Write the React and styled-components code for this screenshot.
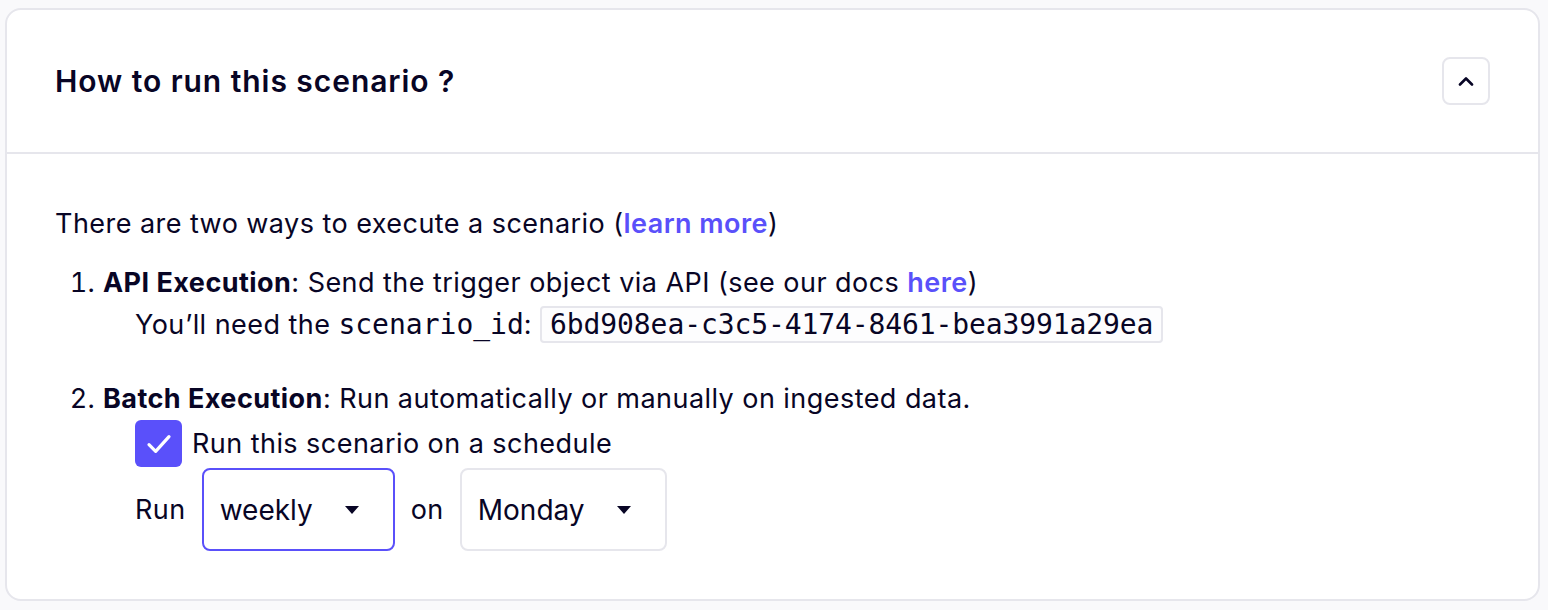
import React, { useState } from 'react';
import styled, { createGlobalStyle } from 'styled-components';

const GlobalStyle = createGlobalStyle`
  body {
    margin: 0;
    background: #f9f9fb;
    font-family: Inter, 'Noto Sans', sans-serif;
    color: #080525;
  }
`;

const Page = styled.div`
  padding: 8px 8px 8px 5px;
`;

const Card = styled.section`
  background: #ffffff;
  border: 2px solid #e6e6ec;
  border-radius: 16px;
  overflow: hidden;
`;

const Header = styled.div`
  display: flex;
  align-items: center;
  justify-content: space-between;
  padding: 47px 48px 47px 48px;
  border-bottom: 2px solid #e6e6ec;
`;

const Title = styled.h2`
  margin: 0;
  font-size: 30px;
  letter-spacing: 0.95px;
  font-weight: 600;
  color: #080525;
`;

const ToggleButton = styled.button`
  width: 48px;
  height: 48px;
  display: flex;
  align-items: center;
  justify-content: center;
  background: #fff;
  border: 2px solid #e6e6ec;
  border-radius: 8px;
  padding: 0;
  cursor: pointer;
`;

const Body = styled.div`
  padding: 52px 48px 48px 48px;
  font-size: 27px;
  letter-spacing: 0.45px;
  line-height: 36px;
`;

const Intro = styled.p`
  margin: 0 0 23px 0;
`;

const Link = styled.a`
  color: #5a50fa;
  font-weight: 600;
  text-decoration: none;
`;

const Steps = styled.ol`
  margin: 0;
  padding-left: 48px;
  display: flex;
  flex-direction: column;
  gap: 38px;
`;

const Step = styled.li`
  padding-left: 0;
`;

const Indent = styled.div`
  margin-left: 32px;
  display: flex;
  align-items: center;
  gap: ${p => p.$gap || 0}px;
  margin-top: ${p => p.$top || 0}px;
`;

const Mono = styled.code`
  font-family: 'DejaVu Sans Mono', 'Liberation Mono', monospace;
  font-size: 28px;
  letter-spacing: 0;
`;

const CodeBox = styled.code`
  font-family: 'DejaVu Sans Mono', 'Liberation Mono', monospace;
  font-size: 28px;
  letter-spacing: -0.1px;
  line-height: 31px;
  padding: 1px 8px;
  margin-left: 8px;
  background: #fdfdfe;
  border: 2px solid #e6e6ec;
  border-radius: 4px;
`;

const Checkbox = styled.button`
  width: 47px;
  height: 47px;
  border-radius: 6px;
  border: none;
  padding: 0;
  background: ${p => (p.$checked ? '#5a50fa' : '#fff')};
  display: flex;
  align-items: center;
  justify-content: center;
  cursor: pointer;
`;

const SelectBox = styled.div`
  height: 83px;
  box-sizing: border-box;
  display: flex;
  align-items: center;
  justify-content: space-between;
  gap: 32px;
  padding: 0 34px 0 16px;
  border: 2px solid ${p => (p.$active ? '#5a50fa' : '#e6e6ec')};
  border-radius: 8px;
  font-size: 28px;
  letter-spacing: 0;
  background: #fff;
`;

const Chevron = () => (
  <svg width="16" height="10" viewBox="0 0 16 10" fill="none">
    <path d="M2 8.5L8 2.5l6 6" stroke="#080525" strokeWidth="2.6" strokeLinecap="round" strokeLinejoin="round" />
  </svg>
);

const Check = () => (
  <svg width="32" height="32" viewBox="0 0 24 24" fill="none">
    <path d="M4.5 12.5l5 5L19.5 6.5" stroke="#fff" strokeWidth="2.4" strokeLinecap="round" strokeLinejoin="round" />
  </svg>
);

const Caret = () => (
  <svg width="14" height="8" viewBox="0 0 14 8">
    <path d="M0 0h14L7 8z" fill="#080525" />
  </svg>
);

const Select = ({ value, active }) => (
  <SelectBox $active={active}>
    <span>{value}</span>
    <Caret />
  </SelectBox>
);

export default function App() {
  const [checked, setChecked] = useState(true);
  return (
    <Page>
      <GlobalStyle />
      <Card>
        <Header>
          <Title>How to run this scenario ?</Title>
          <ToggleButton aria-label="Collapse">
            <Chevron />
          </ToggleButton>
        </Header>
        <Body>
          <Intro>
            There are two ways to execute a scenario (<Link href="#">learn more</Link>)
          </Intro>
          <Steps>
            <Step>
              <strong>API Execution</strong>: Send the trigger object via API (see our docs <Link href="#">here</Link>)
              <Indent $top={5}>
                You’ll need the&nbsp;<Mono>scenario_id</Mono>:
                <CodeBox>6bd908ea-c3c5-4174-8461-bea3991a29ea</CodeBox>
              </Indent>
            </Step>
            <Step>
              <strong>Batch Execution</strong>: Run automatically or manually on ingested data.
              <Indent $gap={10} $top={3}>
                <Checkbox $checked={checked} onClick={() => setChecked(!checked)}>
                  {checked && <Check />}
                </Checkbox>
                Run this scenario on a schedule
              </Indent>
              <Indent $gap={16} $top={1}>
                Run
                <Select value="weekly" active />
                on
                <Select value="Monday" />
              </Indent>
            </Step>
          </Steps>
        </Body>
      </Card>
    </Page>
  );
}
